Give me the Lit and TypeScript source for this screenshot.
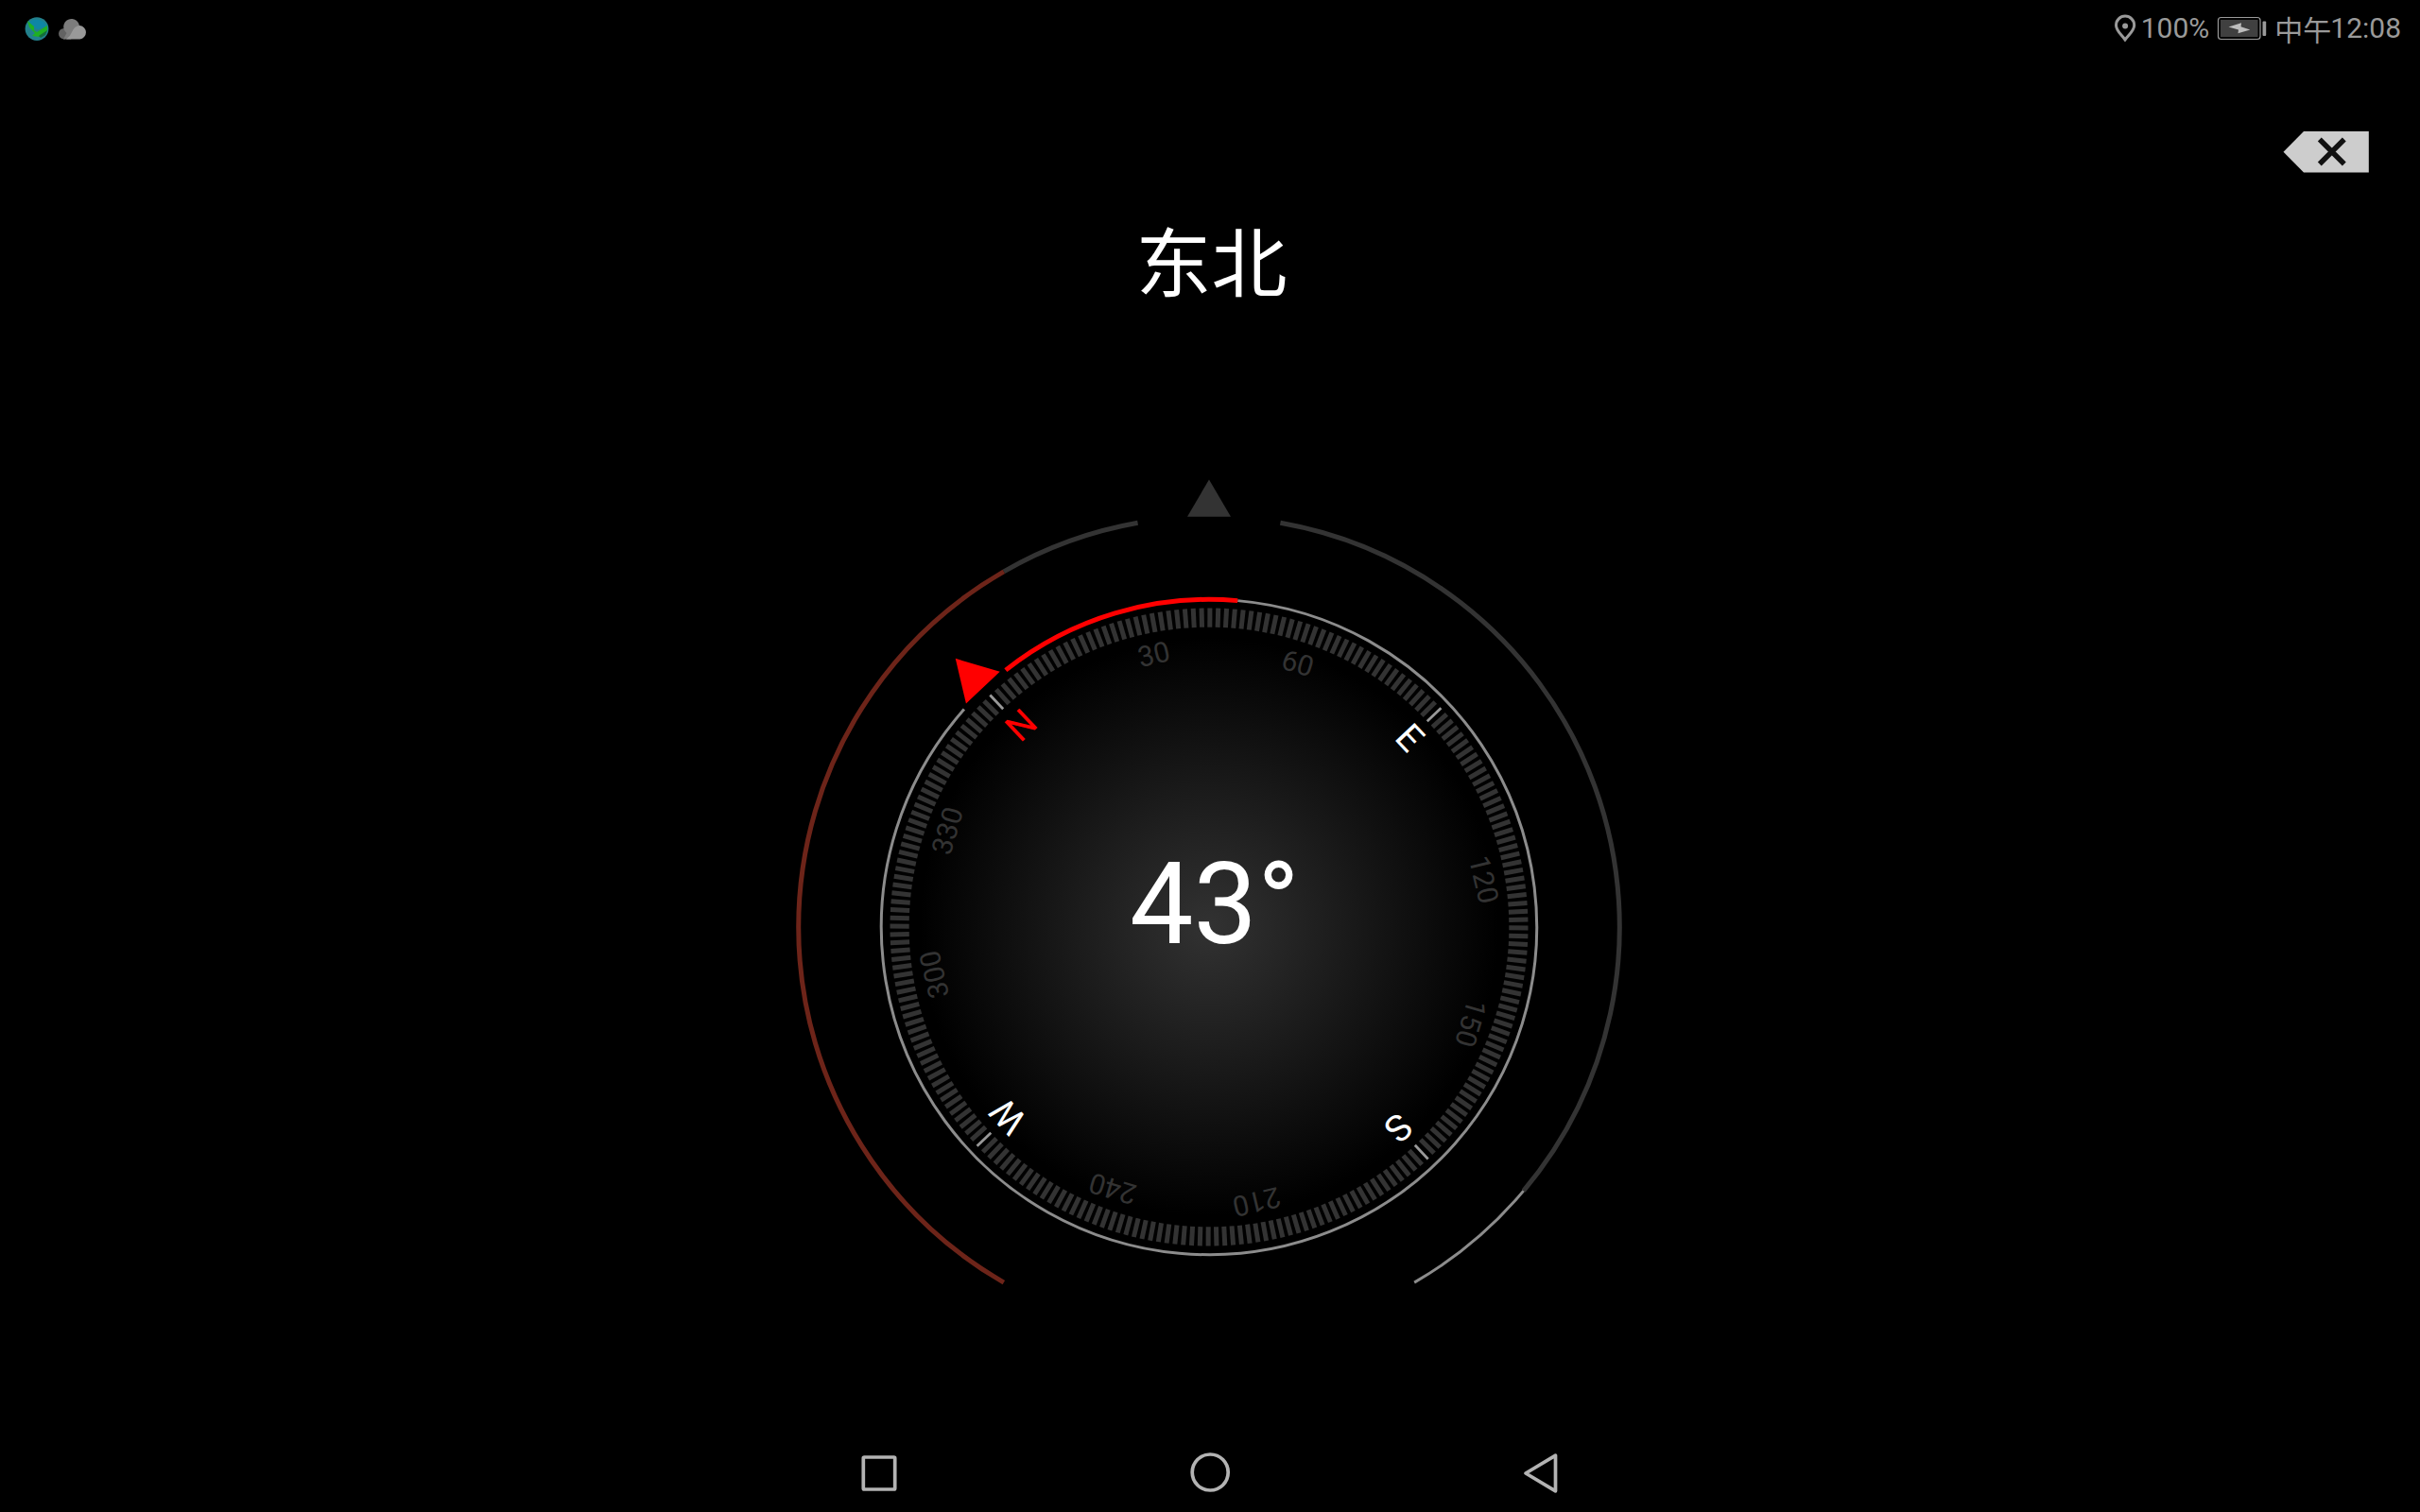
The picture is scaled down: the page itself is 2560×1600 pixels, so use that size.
import { LitElement, html, svg, css } from "lit";
import { customElement, property } from "lit/decorators.js";

const polar = (r: number, deg: number): [number, number] => {
  const a = (deg * Math.PI) / 180;
  return [r * Math.sin(a), -r * Math.cos(a)];
};

/** Clockwise arc around the origin; 0° points up. */
const arc = (r: number, from: number, to: number): string => {
  const [x0, y0] = polar(r, from);
  const [x1, y1] = polar(r, to);
  return `M${x0.toFixed(2)} ${y0.toFixed(2)}A${r} ${r} 0 ${to - from > 180 ? 1 : 0} 1 ${x1.toFixed(2)} ${y1.toFixed(2)}`;
};

const LETTERS: Record<number, string> = { 0: "N", 90: "E", 180: "S", 270: "W" };

@customElement("status-bar")
class StatusBar extends LitElement {
  static styles = css`
    :host {
      display: flex;
      justify-content: space-between;
      align-items: center;
      height: 60px;
      padding: 0 20px 0 26px;
      box-sizing: border-box;
      color: #9a9a9a;
      font: 400 30px/60px Roboto, "Noto Sans CJK SC", sans-serif;
    }
    .side { display: flex; align-items: center; height: 60px; }
    svg { display: block; }
    .cloud { margin-left: 9px; }
    .level { margin-left: 5px; }
    .battery { margin-left: 8px; }
    .clock { margin-left: 8px; display: flex; }
    .noon { font-family: "Noto Sans CJK SC", sans-serif; font-weight: 400; margin-right: -1px; }
  `;
  render() {
    return html`
      <div class="side">
        <svg width="27" height="60" viewBox="26 0 27 60">
          <circle cx="39" cy="30.6" r="12.4" fill="#22808c" />
          <path d="M31 23Q38 18 46 23L50 28L40 31L34 28Z" fill="#0e86a4" />
          <path d="M29 22L36 28L36 32L39 34L50 27L50 33L42 39L34 38L37 35L31 29Z" fill="#1fb022" />
          <path d="M41 38L50 32L48 37L43 40Z" fill="#146e3a" />
        </svg>
        <svg class="cloud" width="30" height="60" viewBox="62 0 30 60">
          <circle cx="67.8" cy="35.7" r="5.8" fill="#636363" />
          <path d="M67 41.5L70.5 35A8.4 8.4 0 1 1 84 29L75 41.5Z" fill="#7c7c7c" />
          <path d="M70 41.5Q74 39 76 34Q79 27 84.5 27A7.3 7.3 0 0 1 84.5 41.5Z" fill="#999" />
        </svg>
      </div>
      <div class="side">
        <svg width="24" height="60" viewBox="2236 0 24 60">
          <path d="M2248 42C2244 36.500 2238.500 32.500 2238.500 26.700A9.600 9.600 0 0 1 2257.700 26.700C2257.700 32.500 2252 36.500 2248 42Z"
            fill="none" stroke="#9a9a9a" stroke-width="3" />
          <circle cx="2248.100" cy="27.500" r="3" fill="#9a9a9a" />
        </svg>
        <span class="level">100%</span>
        <svg class="battery" width="53" height="60" viewBox="2344 0 53 60">
          <rect x="2345.500" y="18.500" width="44.500" height="23" rx="3" fill="none" stroke="#9a9a9a" stroke-width="1.200" />
          <rect x="2348" y="21" width="39.500" height="18" fill="#404040" />
          <path d="M2356.500 28.500L2370 24.300L2369.500 28.300L2379.300 31.500L2366.500 35.300L2367 31.500Z" fill="#bdbdbd" />
          <rect x="2392.500" y="22.500" width="3.700" height="15.500" rx="1" fill="#9a9a9a" />
        </svg>
        <span class="clock"><span class="noon">中午</span><span>12:08</span></span>
      </div>
    `;
  }
}

@customElement("compass-dial")
class CompassDial extends LitElement {
  @property({ type: Number }) heading = 0;

  static styles = css`
    :host { display: block; }
    svg { display: block; }
    .arc { fill: none; }
    .track { stroke: #333; stroke-width: 5; }
    .warn { stroke: #6d2419; stroke-width: 5; }
    .thin { stroke: #8c8c8c; stroke-width: 3; }
    .sweep { stroke: #f00; stroke-width: 5; }
    .tick { stroke: #333; stroke-width: 5; }
    .major { stroke: #999; stroke-width: 2.8; }
    .num, .letter, .value { font-family: Roboto, sans-serif; }
    .num { font-size: 30px; fill: #333; }
    .letter { font-size: 39px; fill: #fff; text-anchor: middle; }
    .north { fill: #f00; }
    .value { font-size: 120px; fill: #fff; }
  `;

  render() {
    const h = this.heading;
    const ticks = Array.from({ length: 240 }, (_, i) => i * 1.5);
    const labels = Array.from({ length: 12 }, (_, i) => i * 30);
    return html`
      <svg width="900" height="900" viewBox="-449 -490 900 900">
        <defs>
          <radialGradient id="glow" gradientUnits="userSpaceOnUse" cx="0" cy="0" r="306">
            <stop offset="0" stop-color="#323232" />
            <stop offset="1" stop-color="#000" />
          </radialGradient>
        </defs>
        <circle r="306" fill="url(#glow)" />
        <path d="M0 -473.500L23 -434.300H-23Z" fill="#333" />
        <path class="arc track" d=${arc(434.3, -30, -10)} />
        <path class="arc warn" d=${arc(434.3, -150, -30)} />
        <path class="arc track" d=${arc(434.3, 10, 130)} />
        <path class="arc thin" d=${arc(434.3, 130, 150)} />
        <path class="arc thin" d=${arc(346.7, 5, 355 - h)} />
        <path class="arc sweep" d=${arc(346.7, 5 - h, 5)} />
        <g transform="rotate(${-h})">
          <path d="M0 -390.800L24.600 -348.400H-24.600Z" fill="#f00" />
          ${ticks.map(
            (t) => svg`<line class=${t % 90 ? "tick" : "major"} y1="-337.500" y2="-317.300" transform="rotate(${t})" />`
          )}
          ${labels.map((t) =>
            LETTERS[t]
              ? svg`<text class=${t ? "letter" : "letter north"} x=${t ? 0 : 2} y="-278.500" transform="rotate(${t})">${LETTERS[t]}</text>`
              : svg`<text class="num" x="-7" y="-284" transform="rotate(${t})">${t}</text>`
          )}
        </g>
        <text class="value" x="-84" y="16.700">${Math.floor(h)}°</text>
      </svg>
    `;
  }
}

@customElement("nav-bar")
class NavBar extends LitElement {
  static styles = css`
    :host {
      display: flex;
      justify-content: center;
      gap: 302px;
      height: 84px;
    }
    svg { display: block; fill: none; stroke: #b3b3b3; stroke-width: 3.7; stroke-linejoin: round; }
  `;
  render() {
    return html`
      <svg width="48" height="84" viewBox="906 1516 48 84"><rect x="913.300" y="1542" width="33.400" height="34" rx="1" /></svg>
      <svg width="48" height="84" viewBox="1256 1516 48 84"><circle cx="1280.200" cy="1558" r="19" /></svg>
      <svg width="48" height="84" viewBox="1606 1516 48 84"><path d="M1614 1559L1645.500 1540.200V1577.800Z" /></svg>
    `;
  }
}

@customElement("app-root")
class AppRoot extends LitElement {
  static styles = css`
    :host {
      display: flex;
      flex-direction: column;
      width: 2560px;
      height: 1600px;
      background: #000;
      overflow: hidden;
    }
    .tools { display: flex; justify-content: flex-end; height: 153px; padding-right: 52px; }
    .tools svg { display: block; margin-top: 76px; }
    .direction {
      margin: 0;
      padding-left: 3px;
      text-align: center;
      height: 278px;
      color: #fff;
      font: 400 80px/120px "Noto Sans CJK SC", sans-serif;
    }
    .dial { display: flex; justify-content: center; flex: 1; }
  `;
  render() {
    return html`
      <status-bar></status-bar>
      <div class="tools">
        <svg width="94" height="50" viewBox="2414 136 94 50">
          <path d="M2415.500 160.700L2437 139H2505.800V182.600H2437Z" fill="#cdcdcd" />
          <path d="M2453.800 147.500L2479.800 173.500M2479.800 147.500L2453.800 173.500" stroke="#111" stroke-width="5.500" />
        </svg>
      </div>
      <h1 class="direction">东北</h1>
      <div class="dial"><compass-dial .heading=${43.35}></compass-dial></div>
      <nav-bar></nav-bar>
    `;
  }
}
